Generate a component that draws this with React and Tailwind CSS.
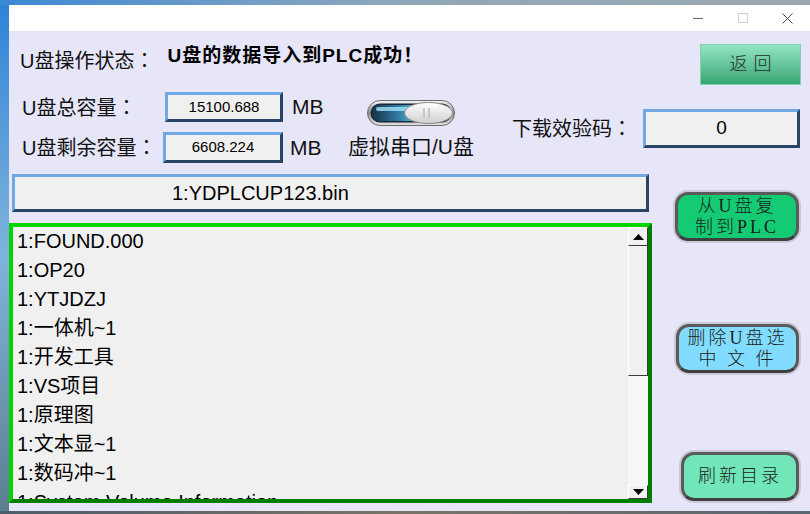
import React from 'react';

const sans = "font-['Liberation_Sans','Noto_Sans_CJK_SC',sans-serif]";
const serif = "font-['Liberation_Serif','Noto_Sans_CJK_SC',serif]";

const files = [
  '1:FOUND.000',
  '1:OP20',
  '1:YTJDZJ',
  '1:一体机~1',
  '1:开发工具',
  '1:VS项目',
  '1:原理图',
  '1:文本显~1',
  '1:数码冲~1',
  '1:System Volume Information',
];

// label whose full-width colon sits centred in its cell, like the original
const Label = ({ text, className }) => (
  <span className={`text-[20px] whitespace-nowrap ${className}`}>
    {text}
    <span className="font-['Noto_Sans_CJK_TC',sans-serif]">：</span>
  </span>
);

// sunken 3d box used for the read-only values
const Field = ({ value, className, textClass }) => (
  <div
    className={`flex items-center justify-center bg-[#f0f0f0] border-[3px] border-t-[#6fa8e2] border-l-[#6fa8e2] border-r-[#2a4564] border-b-[#2a4564] ${className}`}
  >
    <span className={`${sans} text-black ${textClass}`}>{value}</span>
  </div>
);

const RoundButton = ({ lines, className, bg }) => (
  <div className={`rounded-[15px] p-[2px] bg-[#c9c9d9] ${className}`}>
    <div
      className={`h-full rounded-[13px] border-[3px] border-[#5a5a5a] border-b-[#3f3f3f] flex flex-col items-center justify-center ${bg}`}
    >
      {lines.map((l) => (
        <span
          key={l}
          className={`${serif} text-[18px] leading-[21px] tracking-[3px] text-[#1c1c1c] font-light`}
        >
          {l}
        </span>
      ))}
    </div>
  </div>
);

const Toggle = () => (
  <svg width="88" height="26" viewBox="0 0 88 26">
    <defs>
      <linearGradient id="ring" x1="0" y1="0" x2="0" y2="1">
        <stop offset="0" stopColor="#f6f6f6" />
        <stop offset="0.5" stopColor="#8c8c8c" />
        <stop offset="1" stopColor="#e4e4e4" />
      </linearGradient>
      <linearGradient id="track" x1="0" y1="0" x2="1" y2="0">
        <stop offset="0" stopColor="#1a3148" />
        <stop offset="0.45" stopColor="#2b6f96" />
        <stop offset="1" stopColor="#5fd0f4" />
      </linearGradient>
      <linearGradient id="knob" x1="0" y1="0" x2="0" y2="1">
        <stop offset="0" stopColor="#ffffff" />
        <stop offset="1" stopColor="#cfcfcf" />
      </linearGradient>
    </defs>
    <rect x="0.5" y="0.5" width="87" height="25" rx="12.5" fill="url(#ring)" stroke="#6d6d6d" />
    <rect x="3.5" y="3.5" width="81" height="19" rx="9.5" fill="#1b2a38" />
    <rect x="5" y="5" width="50" height="16" rx="8" fill="url(#track)" />
    <rect x="9" y="7" width="38" height="4" rx="2" fill="#a8ecff" opacity="0.75" />
    <ellipse cx="61.5" cy="13" rx="24" ry="10.5" fill="url(#knob)" stroke="#8a8a8a" />
    <line x1="57" y1="8" x2="57" y2="18" stroke="#a8a8a8" />
    <line x1="62" y1="8" x2="62" y2="18" stroke="#a8a8a8" />
  </svg>
);

const ScrollArrow = ({ down, className }) => (
  <div
    className={`flex items-center justify-center bg-[#f0f0f0] border-r border-b border-[#3a3a3a] border-t border-t-white border-l border-l-white ${className}`}
  >
    <svg width="11" height="6" viewBox="0 0 11 6">
      {down ? (
        <polygon points="0,0 11,0 5.5,6" fill="#000" />
      ) : (
        <polygon points="0,6 11,6 5.5,0" fill="#000" />
      )}
    </svg>
  </div>
);

export default function App() {
  return (
    <div className="w-[810px] h-[514px] overflow-hidden flex flex-col bg-[#4c6070]">
      {/* desktop strip above the window */}
      <div className="h-[5px] bg-gradient-to-r from-[#3a88d4] via-[#90a8ba] to-[#9ba7b0]" />

      <div className="flex flex-1">
        <div className="w-[9px] bg-gradient-to-b from-[#2d84d6] via-[#7fb4dc] to-[#5d7e90]" />

        {/* window */}
        <div className="flex-1 flex flex-col">
          <div className="h-[26px] bg-white flex justify-end">
            <div className="w-[45px] flex items-center justify-center">
              <div className="w-[10px] h-px bg-[#6a6a6a]" />
            </div>
            <div className="w-[45px] flex items-center justify-center">
              <div className="w-[10px] h-[10px] border border-[#cfcfcf]" />
            </div>
            <div className="w-[45px] flex items-center justify-center">
              <svg width="11" height="11" viewBox="0 0 11 11">
                <path d="M0.5 0.5L10.5 10.5M10.5 0.5L0.5 10.5" stroke="#4a4a4a" strokeWidth="1" />
              </svg>
            </div>
          </div>

          <div className={`flex-1 flex flex-col bg-[#e6e6f8] ${sans} text-[#111]`}>
            {/* top panel */}
            <div className="flex h-[143px]">
              <div className="w-[480px] flex flex-col">
                <div className="mt-[15px] h-[28px] flex items-center">
                  <Label text="U盘操作状态" className="ml-[11px] leading-[28px]" />
                  <span className="ml-[13px] -mt-[8px] text-[19px] leading-[24px] tracking-[1px] font-bold text-black whitespace-nowrap">
                    U盘的数据导入到PLC成功！
                  </span>
                </div>

                <div className="mt-[18px] flex">
                  <div className="w-[330px] flex flex-col">
                    <div className="h-[30px] flex items-center">
                      <Label text="U盘总容量" className="ml-[13px] w-[143px]" />
                      <Field value="15100.688" className="w-[118px] h-[30px]" textClass="text-[15px]" />
                      <span className="ml-[9px] text-[21px]">MB</span>
                    </div>
                    <div className="mt-[10px] h-[31px] flex items-center">
                      <Label text="U盘剩余容量" className="ml-[13px] w-[141px]" />
                      <Field value="6608.224" className="w-[120px] h-[31px]" textClass="text-[15px]" />
                      <span className="ml-[7px] text-[21px]">MB</span>
                    </div>
                  </div>
                  <div className="ml-[8px] w-[128px] flex flex-col items-center">
                    <div className="mt-[8px] h-[26px]">
                      <Toggle />
                    </div>
                    <span className="mt-[8px] text-[21px] leading-[26px] whitespace-nowrap">虚拟串口/U盘</span>
                  </div>
                </div>
              </div>

              <div className="flex-1 flex flex-col items-end pr-[9px]">
                <button className="mt-[13px] w-[101px] h-[41px] bg-gradient-to-b from-[#92e6c4] to-[#35a573] border border-[#84d2b0] flex items-center justify-center">
                  <span className="text-[18px] tracking-[6px] pl-[6px] text-[#1e2e28] font-light">返回</span>
                </button>
                <div className="mt-[24px] flex items-center">
                  <Label text="下载效验码" />
                  <Field value="0" className="ml-[11px] mr-px w-[157px] h-[39px]" textClass="text-[19px]" />
                </div>
              </div>
            </div>

            {/* file area */}
            <div className="flex flex-1">
              <div className="w-[643px] flex flex-col">
                <div className="ml-[3px] w-[637px] h-[38px] flex items-center bg-[#f0f0f0] border-[3px] border-t-[#6fa8e2] border-l-[#6fa8e2] border-r-[#2a4564] border-b-[#2a4564]">
                  <span className="pl-[157px] text-[20px] text-black">1:YDPLCUP123.bin</span>
                </div>

                <div className="mt-[11px] w-[643px] h-[280px] flex border-4 border-t-[#00d400] border-l-[#00d400] border-r-[#007e00] border-b-[#007e00] bg-[#f0f0f0]">
                  <div className="flex-1 overflow-hidden pl-[4px]">
                    {files.map((f) => (
                      <div key={f} className="h-[29px] text-[20px] leading-[29px] text-black whitespace-nowrap">
                        {f}
                      </div>
                    ))}
                  </div>
                  <div className="w-[20px] flex flex-col">
                    <ScrollArrow className="h-[19px]" />
                    <div className="h-[130px] bg-[#f0f0f0] border-l border-l-white border-r border-r-[#3a3a3a] border-b border-b-[#3a3a3a]" />
                    <div className="flex-1 bg-[#f7f7f7]" />
                    <ScrollArrow down className="h-[14px]" />
                  </div>
                </div>
              </div>

              <div className="flex-1 flex flex-col items-end pr-[9px]">
                <RoundButton
                  lines={['从U盘复', '制到PLC']}
                  className="mt-[16px] w-[128px] h-[53px]"
                  bg="bg-[#14cb74]"
                />
                <RoundButton
                  lines={['删除U盘选', '中 文 件']}
                  className="mt-[79px] w-[127px] h-[53px]"
                  bg="bg-[#82dcff]"
                />
                <RoundButton
                  lines={['刷新目录']}
                  className="mt-[75px] w-[122px] h-[53px]"
                  bg="bg-[#70e6b9]"
                />
              </div>
            </div>
          </div>
        </div>
      </div>

      <div className="h-[3px] bg-gradient-to-r from-[#4d5d68] via-[#7a7468] to-[#5a6670]" />
    </div>
  );
}
